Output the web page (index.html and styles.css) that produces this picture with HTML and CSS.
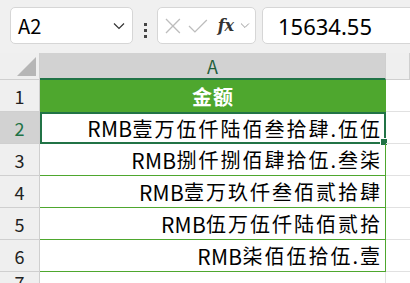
FILE: index.html
```html
<!DOCTYPE html>
<html>
<head>
    <meta charset="UTF-8">
    <title>金额</title>
    <link rel="stylesheet" href="styles.css">
</head>
<body>
    <div class="toolbar">
        <div class="name-box">
            <span>A2</span>
            <svg class="chev" width="12" height="8" viewBox="0 0 12 8"><path d="M1 1.5 L6 6.5 L11 1.5" fill="none" stroke="#333" stroke-width="1.2"/></svg>
        </div>
        <div class="dots"><i></i><i></i><i></i></div>
        <div class="fx-buttons">
            <svg width="18" height="18" viewBox="0 0 18 18"><path d="M2 2 L16 16 M16 2 L2 16" stroke="#bdbdbd" stroke-width="1.3"/></svg>
            <svg width="20" height="18" viewBox="0 0 20 18"><path d="M1 9 L7 15 L19 3" fill="none" stroke="#bdbdbd" stroke-width="1.3"/></svg>
            <span class="fx">fx</span>
            <svg width="10" height="7" viewBox="0 0 10 7"><path d="M1 1.5 L5 5.5 L9 1.5" fill="none" stroke="#9a9a9a" stroke-width="1"/></svg>
        </div>
        <div class="formula">15634.55</div>
    </div>

    <div class="sheet">
        <div class="corner"><span class="tri"></span></div>
        <div class="col-head sel">A</div>
        <div class="col-head">&nbsp;</div>

        <div class="row-head">1</div>
        <div class="cell title">金额</div>
        <div class="cell empty"></div>

        <div class="row-head sel">2</div>
        <div class="cell data active"><span class="cur">RMB</span>壹万伍仟陆佰叁拾肆.伍伍<span class="handle"></span></div>
        <div class="cell empty"></div>

        <div class="row-head">3</div>
        <div class="cell data"><span class="cur">RMB</span>捌仟捌佰肆拾伍.叁柒</div>
        <div class="cell empty"></div>

        <div class="row-head">4</div>
        <div class="cell data"><span class="cur">RMB</span>壹万玖仟叁佰贰拾肆</div>
        <div class="cell empty"></div>

        <div class="row-head">5</div>
        <div class="cell data"><span class="cur">RMB</span>伍万伍仟陆佰贰拾</div>
        <div class="cell empty"></div>

        <div class="row-head">6</div>
        <div class="cell data"><span class="cur">RMB</span>柒佰伍拾伍.壹</div>
        <div class="cell empty"></div>

        <div class="row-head">7</div>
        <div class="cell plain"></div>
        <div class="cell empty"></div>
    </div>
</body>
</html>
```

FILE: styles.css
```css
body {
    margin: 0;
    background-color: #f0f0f0;
    font-family: "Noto Sans CJK SC", "Noto Sans", sans-serif;
    color: #000;
    overflow: hidden;
}
.toolbar {
    display: flex;
    height: 53px;
    box-sizing: border-box;
    padding: 7px 0 0 10px;
    overflow: hidden;
}
.name-box, .fx-buttons, .formula {
    height: 37px;
    box-sizing: border-box;
    background: #fff;
    border: 1px solid #d6d6d6;
    border-radius: 5px;
    display: flex;
    align-items: center;
}
.name-box {
    width: 123px;
    padding: 0 7px 0 7px;
    justify-content: space-between;
    font-size: 20px;
}
.dots {
    width: 24px;
    display: flex;
    flex-direction: column;
    align-items: center;
    justify-content: center;
    gap: 3px;
}
.dots i {
    width: 3px;
    height: 3px;
    background: #444;
}
.fx-buttons {
    width: 99px;
    padding: 0 5px 0 6px;
    gap: 6px;
}
.fx {
    font-family: "DejaVu Serif", serif;
    font-style: italic;
    font-weight: bold;
    font-size: 16px;
    color: #333;
    margin-left: 4px;
}
.formula {
    margin-left: 6px;
    flex: 1;
    margin-right: -10px;
    padding-left: 15px;
    font-family: "Noto Sans", sans-serif;
    font-size: 22px;
}
.sheet {
    display: grid;
    grid-template-columns: 40px 346px 1fr;
    grid-template-rows: 27px repeat(6, 32px) 20px;
    background: #fff;
}
.corner, .col-head, .row-head {
    background: #efefef;
    border-right: 1px solid #cfcfcf;
    border-bottom: 1px solid #cfcfcf;
    display: flex;
    align-items: center;
    justify-content: center;
    font-size: 18px;
    color: #222;
}
.corner {
    position: relative;
}
.tri {
    position: absolute;
    right: 3px;
    bottom: 3px;
    width: 0;
    height: 0;
    border-left: 19px solid transparent;
    border-bottom: 19px solid #b6b6b6;
}
.col-head.sel {
    background: #d2d2d2;
    border-bottom: 2px solid #217346;
    color: #1e5e3a;
}
.row-head.sel {
    background: #d2d2d2;
    color: #217346;
}
.cell {
    box-sizing: border-box;
    display: flex;
    align-items: center;
    justify-content: flex-end;
    font-size: 20px;
    letter-spacing: 2px;
    padding-right: 3px;
    position: relative;
}
.cur {
    font-size: 21px;
    letter-spacing: 0.3px;
}
.title {
    background: #4ea72e;
    color: #fff;
    font-weight: bold;
    justify-content: center;
    letter-spacing: 1px;
    padding-right: 0;
}
.data {
    border-bottom: 1px solid #4ea72e;
    border-right: 1px solid #4ea72e;
}
.active {
    border: 2px solid #217346;
    padding-right: 2px;
}
.handle {
    position: absolute;
    right: -4px;
    bottom: -4px;
    width: 6px;
    height: 6px;
    background: #217346;
    border: 1px solid #fff;
}
.plain {
    border-right: 1px solid #e1e1e1;
}
.empty {
    border-bottom: 1px solid #e1e1e1;
}
```
